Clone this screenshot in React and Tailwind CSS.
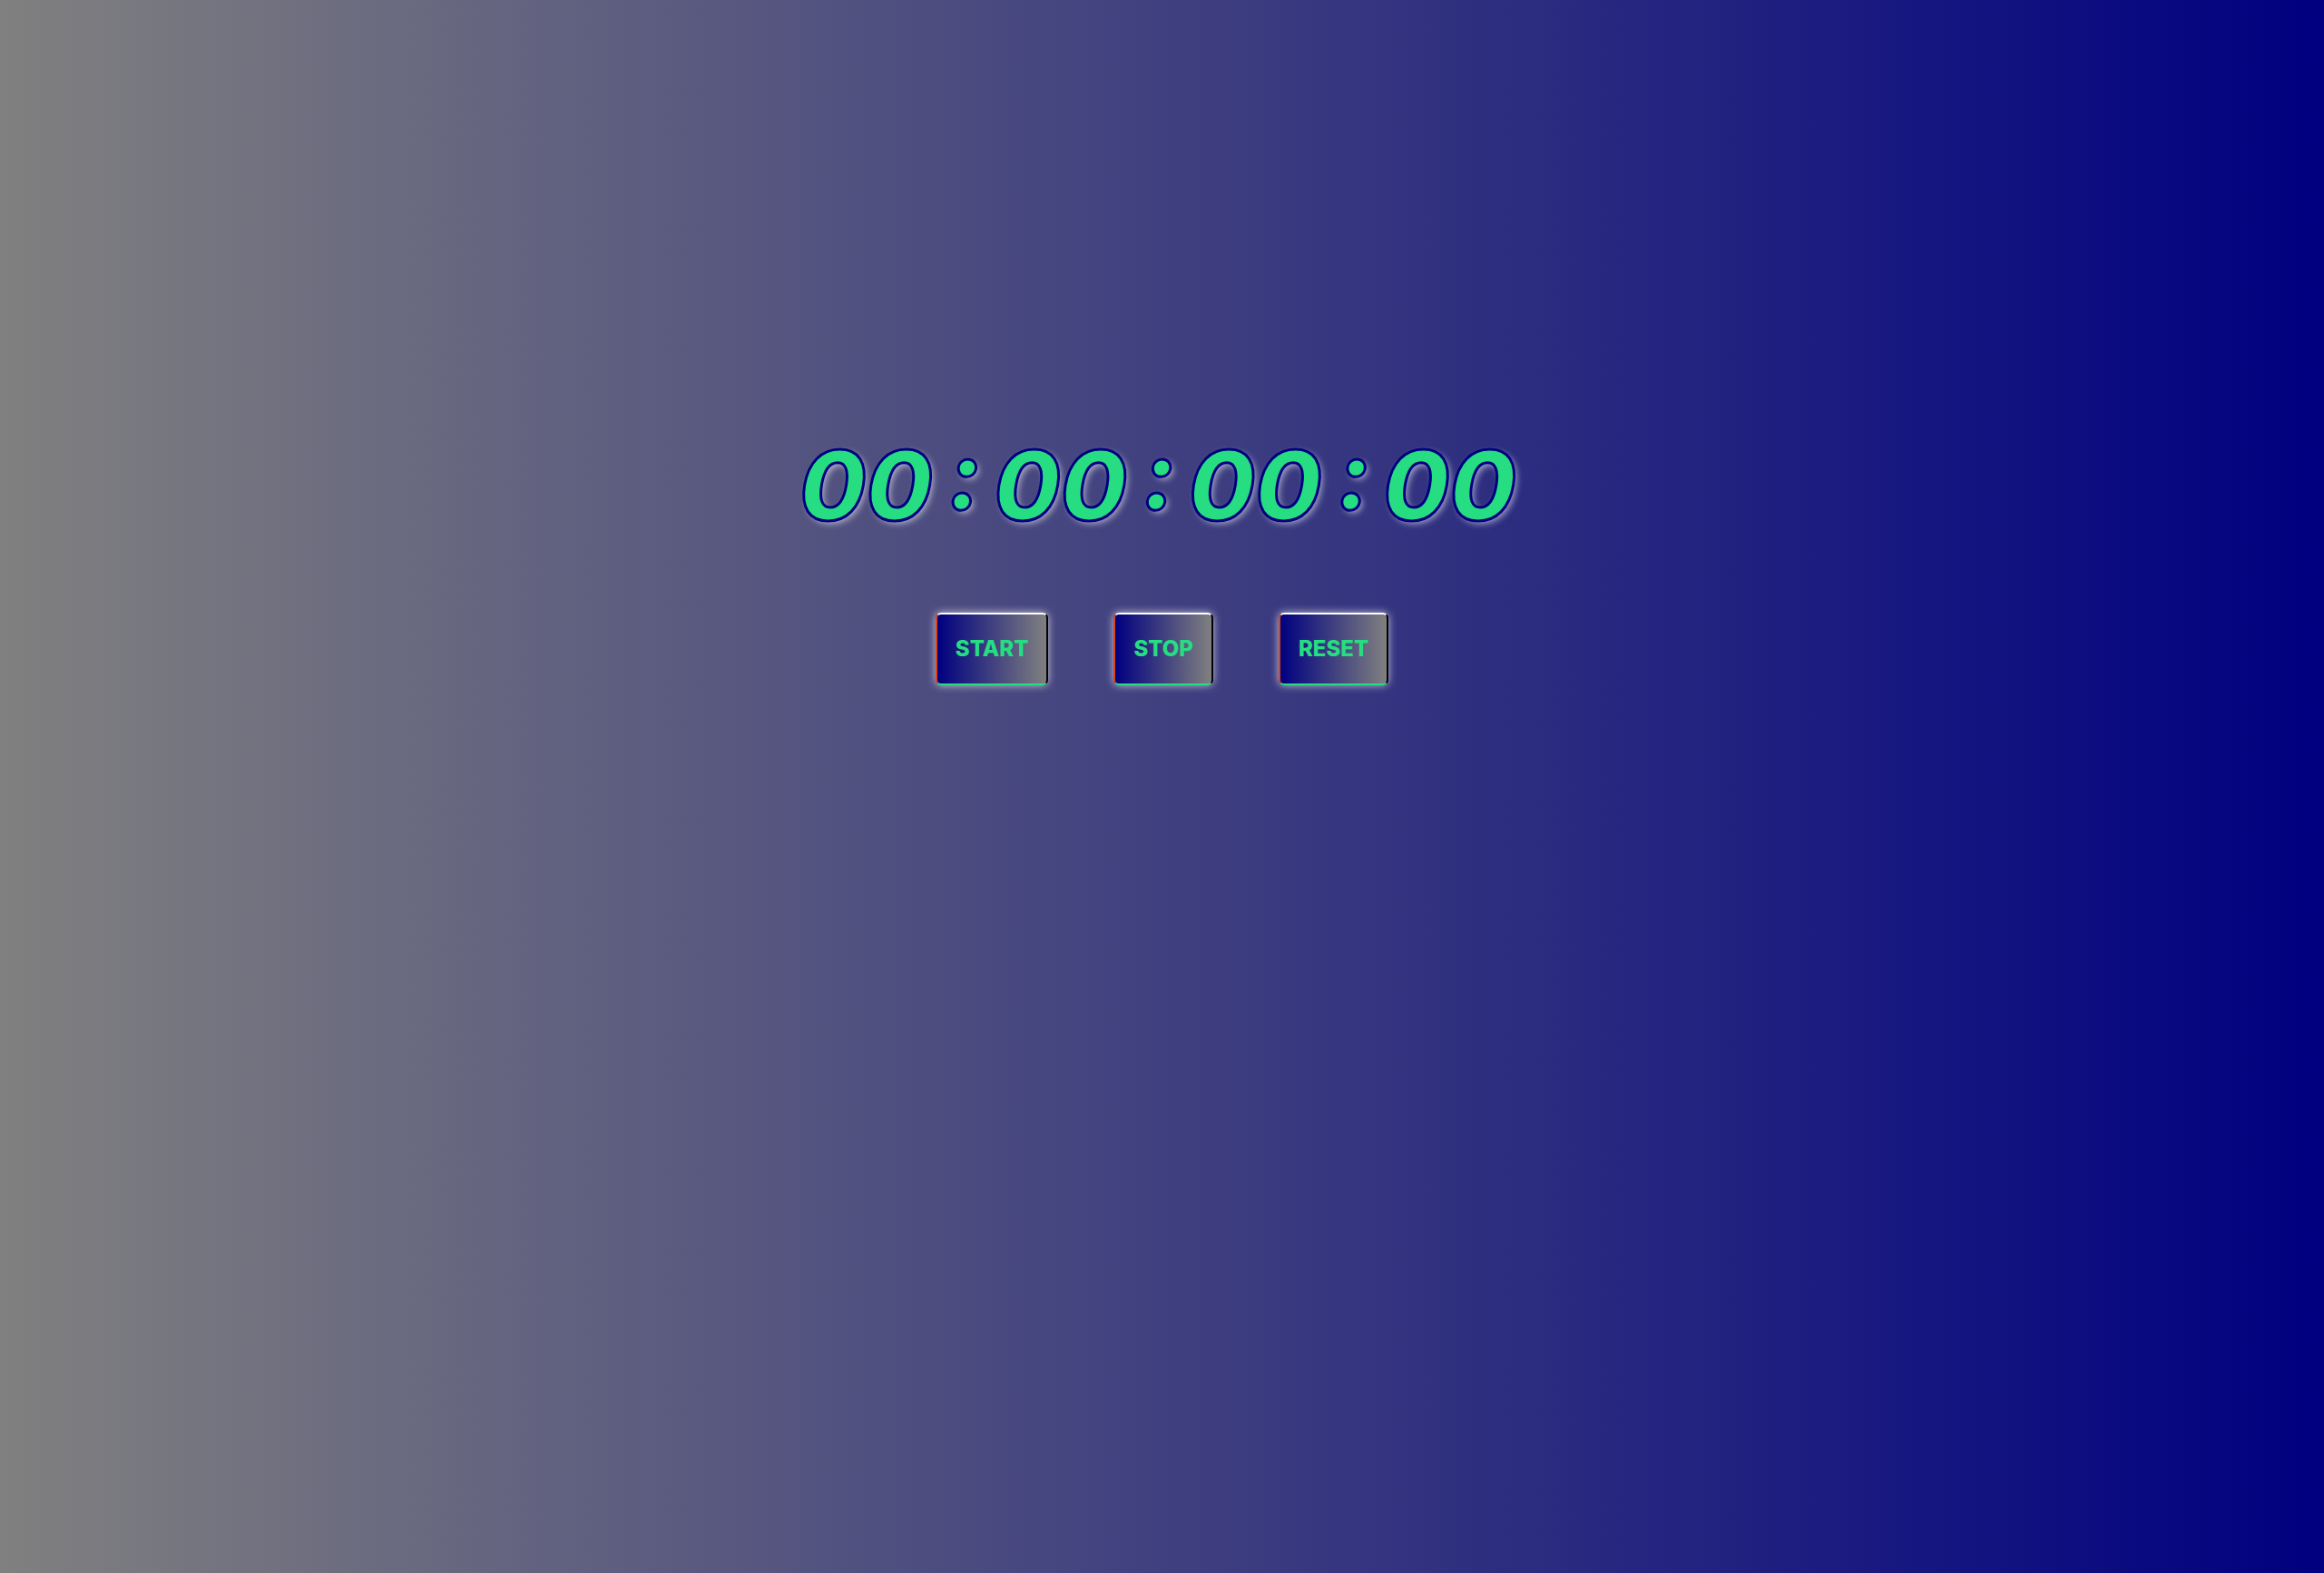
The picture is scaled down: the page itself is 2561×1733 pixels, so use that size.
import React from 'react'

const Button = ({ label }) => (
  <button className="rounded-md border-2 border-t-white border-l-[#d9431e] border-b-[#26de81] border-r-black bg-[linear-gradient(to_right,#000080,#808080)] px-[20px] py-[20px] text-[24px] leading-[36px] font-extrabold text-[#26de81] shadow-[0_0_10px_rgba(255,255,255,0.7)] cursor-pointer">
    {label}
  </button>
)

const App = () => {
  return (
    <div className="min-h-screen w-full bg-[linear-gradient(to_right,#808080,#000080)] flex flex-col items-center pt-[470px] font-['Inter','Open_Sans',sans-serif]">
      <h1 className="pr-[10px] text-[106px] leading-[130px] font-extrabold italic text-[#26de81] [-webkit-text-stroke:3px_#000080] [text-shadow:3px_3px_7px_rgba(255,255,255,0.55)] whitespace-pre [word-spacing:-8px]">
        00 : 00 : 00 : 00
      </h1>
      <div className="flex gap-[72px] mt-[75px]">
        <Button label="START" />
        <Button label="STOP" />
        <Button label="RESET" />
      </div>
    </div>
  )
}

export default App
